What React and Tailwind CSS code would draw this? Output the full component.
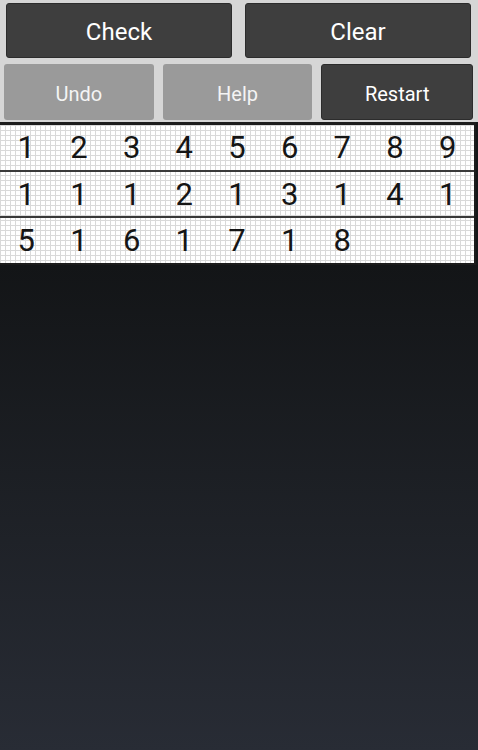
const rows = [
  ['1', '2', '3', '4', '5', '6', '7', '8', '9'],
  ['1', '1', '1', '2', '1', '3', '1', '4', '1'],
  ['5', '1', '6', '1', '7', '1', '8', '', ''],
];

const rowH = ['h-[47px] border-b-2 border-[#3a3a3a]', 'h-[46px] border-b-2 border-[#3a3a3a]', 'h-[45px]'];

const App = () => {
  return (
    <div className="w-[478px] h-[750px] flex flex-col bg-[#141618] font-['Roboto',sans-serif] overflow-hidden">
      {/* button panel */}
      <div className="bg-[#d6d6d6] pt-[3px] pb-[2px]">
        <div className="flex gap-[13px] pl-[6px] pr-[7px]">
          <button className="flex-1 h-[55px] pt-[3px] rounded-[3px] bg-[#3e3e3e] border border-[#2c2c2c] text-white text-[24px] leading-none">
            Check
          </button>
          <button className="flex-1 h-[55px] pt-[3px] rounded-[3px] bg-[#3e3e3e] border border-[#2c2c2c] text-white text-[24px] leading-none">
            Clear
          </button>
        </div>
        <div className="flex gap-[9px] pl-[4px] pr-[5px] mt-[6px]">
          <button className="flex-1 h-[56px] pt-[3px] rounded-[3px] bg-[#9a9a9a] text-[#f4f4f4] text-[20px] leading-none">
            Undo
          </button>
          <button className="flex-1 h-[56px] pt-[3px] rounded-[3px] bg-[#9a9a9a] text-[#f4f4f4] text-[20px] leading-none">
            Help
          </button>
          <button className="flex-1 h-[56px] pt-[3px] rounded-[3px] bg-[#3e3e3e] border border-[#2c2c2c] text-white text-[20px] leading-none">
            Restart
          </button>
        </div>
      </div>

      {/* number grid */}
      <div className="w-[476px] border-t-[3px] border-b-[2px] border-r-[2px] border-[#1c1c1c] bg-white bg-[linear-gradient(to_right,#d9d9d9_1px,transparent_1px),linear-gradient(to_bottom,#d9d9d9_1px,transparent_1px)] bg-[length:5px_5px]">
        {rows.map((r, i) => (
          <div key={i} className={`grid grid-cols-9 ${rowH[i]}`}>
            {r.map((n, j) => (
              <div key={j} className="flex items-center justify-center text-[31px] leading-none text-[#151515]">
                {n}
              </div>
            ))}
          </div>
        ))}
      </div>

      <div className="flex-1 bg-[linear-gradient(to_bottom,#131517,#282c35)]" />
    </div>
  );
};

export default App;
